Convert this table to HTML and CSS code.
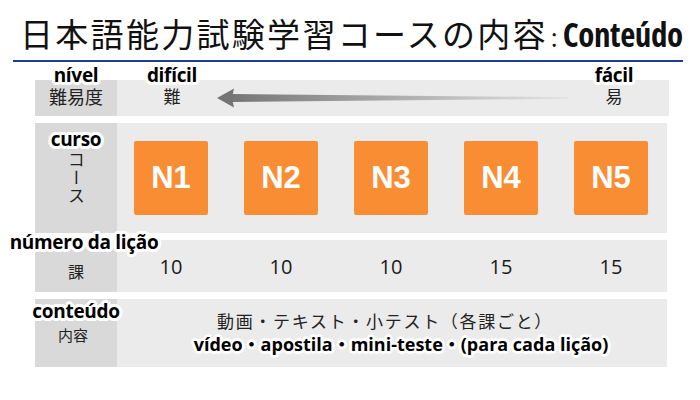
FILE: index.html
```html
<!DOCTYPE html>
<html lang="ja">
<head>
<meta charset="utf-8">
<link rel="stylesheet" href="styles.css">
</head>
<body>
<header class="title">
  <span class="title-jp">日本語能力試験学習コースの内容</span><span class="title-colon">:</span><span class="title-pt">Conteúdo</span>
</header>
<div class="rule"></div>

<section class="table">
  <div class="row row-level">
    <div class="head">
      <span class="tag">nível</span>
      <span class="jp">難易度</span>
    </div>
    <div class="body level-body">
      <div class="end">
        <span class="tag">difícil</span>
        <span class="jp">難</span>
      </div>
      <svg class="arrow" width="352" height="22" viewBox="0 0 352 22">
        <defs>
          <linearGradient id="shaft" x1="0" y1="0" x2="1" y2="0">
            <stop offset="0" stop-color="#767676"/>
            <stop offset="0.55" stop-color="#b4b4b4"/>
            <stop offset="1" stop-color="#e4e4e4"/>
          </linearGradient>
        </defs>
        <polygon points="15,7 352,10.2 352,11.8 15,15" fill="url(#shaft)"/>
        <polygon points="0,11 17,1.5 15,11 17,20.5" fill="#747474"/>
      </svg>
      <div class="end">
        <span class="tag">fácil</span>
        <span class="jp">易</span>
      </div>
    </div>
  </div>

  <div class="row row-course">
    <div class="head">
      <span class="tag">curso</span>
      <span class="jp vertical">コース</span>
    </div>
    <div class="body cols">
      <div class="cell"><div class="level-box">N1</div></div>
      <div class="cell"><div class="level-box">N2</div></div>
      <div class="cell"><div class="level-box">N3</div></div>
      <div class="cell"><div class="level-box">N4</div></div>
      <div class="cell"><div class="level-box">N5</div></div>
    </div>
  </div>

  <div class="row row-lessons">
    <div class="head">
      <span class="tag tag-wide">número da lição</span>
      <span class="jp jp-lesson">課</span>
    </div>
    <div class="body cols">
      <div class="cell num">10</div>
      <div class="cell num">10</div>
      <div class="cell num">10</div>
      <div class="cell num">15</div>
      <div class="cell num">15</div>
    </div>
  </div>

  <div class="row row-content">
    <div class="head">
      <span class="tag">conteúdo</span>
      <span class="jp jp-small">内容</span>
    </div>
    <div class="body content-body">
      <p class="content-jp">動画・テキスト・小テスト（各課ごと）</p>
      <p class="content-pt">vídeo・apostila・mini-teste・(para cada lição)</p>
    </div>
  </div>
</section>
</body>
</html>
```

FILE: styles.css
```css
* { box-sizing: border-box; }

html, body {
  margin: 0;
  padding: 0;
  background: #ffffff;
}

body {
  width: 700px;
  height: 400px;
  overflow: hidden;
  font-family: "Open Sans", "Noto Sans CJK JP", sans-serif;
  color: #222;
}

.title {
  display: flex;
  align-items: baseline;
  height: 60px;
  padding: 12px 0 0 20px;
  white-space: nowrap;
}

.title-jp {
  font-family: "Noto Sans CJK JP", sans-serif;
  font-size: 33px;
  letter-spacing: 2.3px;
  line-height: 40px;
  color: #111;
}

.title-colon {
  font-family: "Open Sans", sans-serif;
  font-size: 26px;
  margin: 0 5px 0 3px;
  color: #111;
}

.title-pt {
  font-family: "Open Sans", sans-serif;
  font-weight: 700;
  font-size: 33px;
  font-stretch: 75%;
  letter-spacing: -0.4px;
  color: #111;
}

.rule {
  margin-left: 13px;
  width: 670px;
  height: 2px;
  background: #1f3e92;
}

.table {
  margin: 18px 0 0 35px;
  width: 632px;
  display: flex;
  flex-direction: column;
  gap: 7px;
}

.row {
  display: flex;
}

.row-level { height: 36px; }
.row-course { height: 110px; }
.row-lessons { height: 52px; }
.row-content { height: 68px; }

.head {
  width: 82px;
  flex: none;
  background: #d9d9d9;
  display: flex;
  flex-direction: column;
  align-items: center;
}

.body {
  flex: 1;
  background: #ebebeb;
}

.tag {
  position: relative;
  z-index: 2;
  font-family: "Open Sans", sans-serif;
  font-weight: 700;
  font-size: 19px;
  line-height: 20px;
  color: #000;
  white-space: nowrap;
  letter-spacing: -0.3px;
  text-shadow:
    3px 0 0 #fff, -3px 0 0 #fff, 0 3px 0 #fff, 0 -3px 0 #fff,
    2px 2px 0 #fff, -2px -2px 0 #fff, 2px -2px 0 #fff, -2px 2px 0 #fff,
    3px 1px 0 #fff, -3px 1px 0 #fff, 3px -1px 0 #fff, -3px -1px 0 #fff,
    1px 3px 0 #fff, -1px 3px 0 #fff, 1px -3px 0 #fff, -1px -3px 0 #fff,
    0 0 3px #fff;
}

.jp {
  font-family: "Noto Sans CJK JP", sans-serif;
  font-size: 17px;
  line-height: 20px;
  color: #222;
}

.row-level .tag {
  margin-top: -15px;
}

.row-level .jp {
  margin-top: 2px;
  line-height: 18px;
}

.row-level .head .jp { font-size: 18px; }

.level-body {
  display: grid;
  grid-template-columns: 110px 1fr 110px;
  align-items: start;
}

.end {
  display: flex;
  flex-direction: column;
  align-items: center;
}

.arrow {
  display: block;
  margin: 7px -10px 0 -10px;
}

.row-course .head { padding-top: 6px; }

.vertical {
  writing-mode: vertical-rl;
  letter-spacing: 1px;
  margin-top: 2px;
  line-height: 20px;
}

.cols {
  display: grid;
  grid-template-columns: repeat(5, 110px);
  align-items: center;
}

.cell {
  display: flex;
  justify-content: center;
}

.level-box {
  width: 74px;
  height: 74px;
  margin-left: -2px;
  border-radius: 2px;
  background: #f98d34;
  color: #fff;
  font-family: "Liberation Sans", Arial, sans-serif;
  font-weight: 700;
  font-size: 31px;
  display: flex;
  align-items: center;
  justify-content: center;
}

.tag-wide {
  margin-top: -8px;
  margin-left: 16px;
}

.jp-lesson {
  font-size: 16px;
  margin-top: 9px;
}

.num {
  font-family: "Open Sans", sans-serif;
  font-size: 20px;
  color: #1a1a1a;
  margin-left: -2px;
}

.row-content .head { padding-top: 2px; }

.jp-small {
  font-size: 15px;
  margin-top: 4px;
  margin-right: 6px;
}

.content-body {
  display: flex;
  flex-direction: column;
  align-items: center;
  padding-top: 11px;
}

.content-body p { margin: 0; white-space: nowrap; }

.content-jp {
  font-family: "Noto Sans CJK JP", sans-serif;
  font-size: 17px;
  line-height: 22px;
  letter-spacing: 1.7px;
  color: #222;
  margin-right: 14px !important;
}

.content-pt {
  font-family: "Open Sans", "Noto Sans CJK JP", sans-serif;
  font-weight: 700;
  font-size: 18px;
  line-height: 24px;
  color: #000;
  margin-left: 18px !important;
  text-shadow:
    3px 0 0 #fff, -3px 0 0 #fff, 0 3px 0 #fff, 0 -3px 0 #fff,
    2px 2px 0 #fff, -2px -2px 0 #fff, 2px -2px 0 #fff, -2px 2px 0 #fff,
    0 0 3px #fff;
}
```
